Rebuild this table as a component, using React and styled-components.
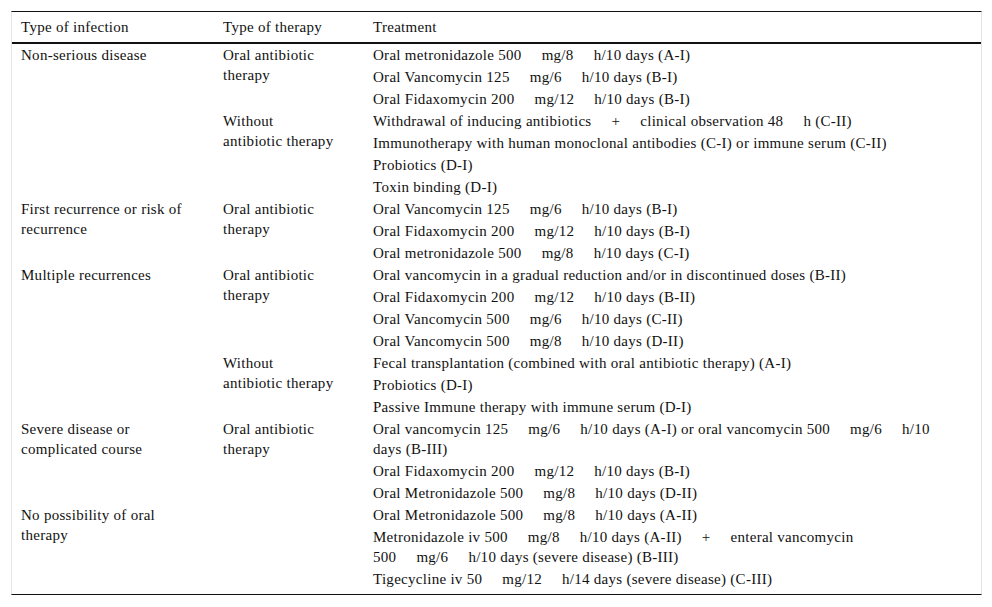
import React from 'react';
import styled, { createGlobalStyle } from 'styled-components';

const GlobalStyle = createGlobalStyle`
  html, body {
    margin: 0;
    padding: 0;
    background: #ffffff;
  }
  body {
    font-family: "Liberation Serif", "Times New Roman", serif;
    color: #111;
  }
  *, *::before, *::after {
    box-sizing: border-box;
  }
`;

// "~" in a treatment marks the wide non-breaking gap used around doses
const groups = [
  {
    infection: 'Non-serious disease',
    therapies: [
      {
        name: 'Oral antibiotic\ntherapy',
        items: [
          'Oral metronidazole 500~mg/8~h/10 days (A-I)',
          'Oral Vancomycin 125~mg/6~h/10 days (B-I)',
          'Oral Fidaxomycin 200~mg/12~h/10 days (B-I)',
        ],
      },
      {
        name: 'Without\nantibiotic therapy',
        items: [
          'Withdrawal of inducing antibiotics~+~clinical observation 48~h (C-II)',
          'Immunotherapy with human monoclonal antibodies (C-I) or immune serum (C-II)',
          'Probiotics (D-I)',
          'Toxin binding (D-I)',
        ],
      },
    ],
  },
  {
    infection: 'First recurrence or risk of recurrence',
    therapies: [
      {
        name: 'Oral antibiotic\ntherapy',
        items: [
          'Oral Vancomycin 125~mg/6~h/10 days (B-I)',
          'Oral Fidaxomycin 200~mg/12~h/10 days (B-I)',
          'Oral metronidazole 500~mg/8~h/10 days (C-I)',
        ],
      },
    ],
  },
  {
    infection: 'Multiple recurrences',
    therapies: [
      {
        name: 'Oral antibiotic\ntherapy',
        items: [
          'Oral vancomycin in a gradual reduction and/or in discontinued doses (B-II)',
          'Oral Fidaxomycin 200~mg/12~h/10 days (B-II)',
          'Oral Vancomycin 500~mg/6~h/10 days (C-II)',
          'Oral Vancomycin 500~mg/8~h/10 days (D-II)',
        ],
      },
      {
        name: 'Without\nantibiotic therapy',
        items: [
          'Fecal transplantation (combined with oral antibiotic therapy) (A-I)',
          'Probiotics (D-I)',
          'Passive Immune therapy with immune serum (D-I)',
        ],
      },
    ],
  },
  {
    infection: 'Severe disease or complicated course',
    therapies: [
      {
        name: 'Oral antibiotic\ntherapy',
        items: [
          'Oral vancomycin 125~mg/6~h/10 days (A-I) or oral vancomycin 500~mg/6~h/10 days (B-III)',
          'Oral Fidaxomycin 200~mg/12~h/10 days (B-I)',
          'Oral Metronidazole 500~mg/8~h/10 days (D-II)',
        ],
      },
    ],
  },
  {
    infection: 'No possibility of oral therapy',
    therapies: [
      {
        name: '',
        items: [
          'Oral Metronidazole 500~mg/8~h/10 days (A-II)',
          'Metronidazole iv 500~mg/8~h/10 days (A-II)~+~enteral vancomycin 500~mg/6~h/10 days (severe disease) (B-III)',
          'Tigecycline iv 50~mg/12~h/14 days (severe disease) (C-III)',
        ],
      },
    ],
  },
];

const Dose = ({ text }) => {
  const parts = text.split('~');
  return parts.map((p, i) => (
    <React.Fragment key={i}>
      {i > 0 && <Gap>{'\u00a0'}</Gap>}
      {p}
    </React.Fragment>
  ));
};

const App = () => {
  const rows = [];
  groups.forEach((g, gi) => {
    const total = g.therapies.reduce((n, t) => n + t.items.length, 0);
    g.therapies.forEach((t, ti) => {
      t.items.forEach((item, ii) => {
        rows.push(
          <tr key={`${gi}-${ti}-${ii}`}>
            {ti === 0 && ii === 0 && (
              <InfectionCell rowSpan={total}>{g.infection}</InfectionCell>
            )}
            {ii === 0 && (
              <TherapyCell rowSpan={t.items.length}>{t.name}</TherapyCell>
            )}
            <TreatmentCell>
              <Dose text={item} />
            </TreatmentCell>
          </tr>
        );
      });
    });
  });

  return (
    <>
      <GlobalStyle />
      <Page>
        <Frame>
          <Table>
            <colgroup>
              <col style={{ width: 202 }} />
              <col style={{ width: 150 }} />
              <col />
            </colgroup>
            <thead>
              <tr>
                <Head>Type of infection</Head>
                <Head>Type of therapy</Head>
                <Head>Treatment</Head>
              </tr>
            </thead>
            <tbody>{rows}</tbody>
          </Table>
        </Frame>
      </Page>
    </>
  );
};

const Page = styled.div`
  padding: 11px;
`;

const Frame = styled.div`
  width: 971px;
  border-top: 1px solid #111;
  border-bottom: 1px solid #111;
  border-left: 1px solid #e4e4e4;
  border-right: 1px solid #e4e4e4;
  padding-bottom: 4px;
`;

const Table = styled.table`
  width: 100%;
  border-collapse: collapse;
  table-layout: fixed;
  font-size: 15px;
  letter-spacing: 0.28px;
  line-height: 20px;
  color: #111;
`;

const Head = styled.th`
  text-align: left;
  font-weight: normal;
  padding: 5px 10px 5px 9px;
  border-bottom: 2px solid #111;
`;

const Cell = styled.td`
  vertical-align: top;
  padding: 1px 10px 1px 9px;
`;

const InfectionCell = styled(Cell)`
  padding-right: 22px;
`;

const TherapyCell = styled(Cell)`
  padding-right: 10px;
  white-space: pre-line;
`;

const TreatmentCell = styled(Cell)`
  padding-right: 26px;
`;

const Gap = styled.span`
  margin: 0 8px;
`;

export default App;
